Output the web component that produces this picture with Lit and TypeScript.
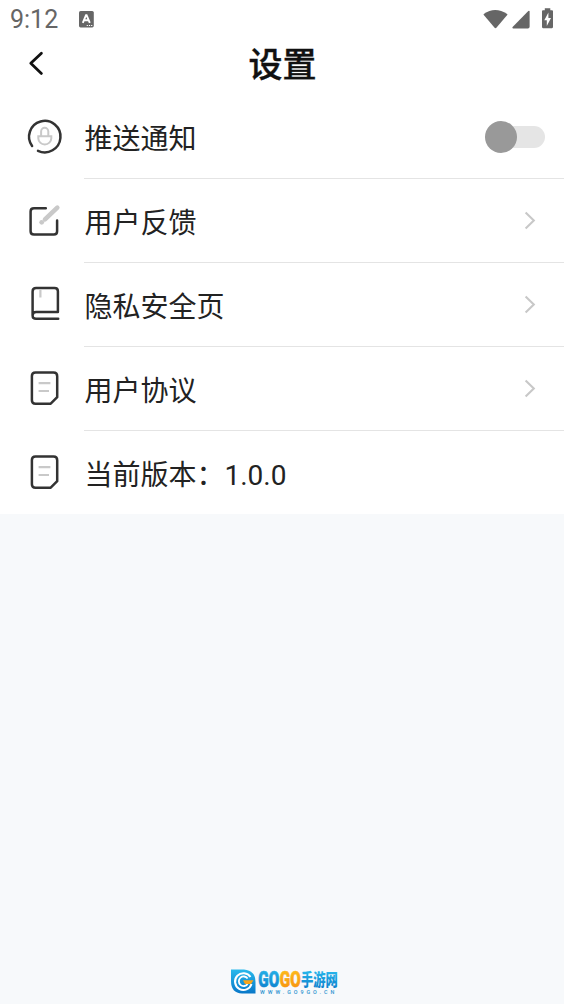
import { LitElement, html, css, svg } from "lit";
import { customElement } from "lit/decorators.js";

const doc = svg`
  <path class="dark" d="M15.5 8.5H33.5Q37.2 8.5 37.2 12.2V33.2L30.7 39.7H15.5Q11.9 39.7 11.9 36.2V12Q11.9 8.5 15.5 8.5Z"/>
  <path class="pale" d="M18.6 19.2H30.4M18.6 27H29"/>`;

const icons = {
  notify: svg`
    <path class="dark" d="M12.1 33.9A15.7 15.7 0 1 1 18 38.8"/>
    <path class="pale thin" d="M21.1 24V19.4A3.6 3.6 0 0 1 28.3 19.4V24M18.3 24.2H31.3V26.3A6.5 6.1 0 0 1 18.3 26.3Z"/>`,
  feedback: svg`
    <path class="dark" d="M25.8 12.3H14Q10.6 12.3 10.6 15.5V35.2Q10.6 38.5 14 38.5H33.9Q37.1 38.5 37.1 35.2V24.5"/>
    <path class="pencil" d="M25 23.4L37.3 11.6"/><circle cx="21.7" cy="26.3" r="2.4" fill="#c9c9c9"/>`,
  privacy: svg`
    <path class="dark" d="M12.6 35.2V11.5Q12.6 8.1 16.1 8.1H34.5Q37.9 8.1 37.9 11.3V31.9H16.2Q12.6 31.9 12.6 35.4T16.2 38.8H38.2"/>
    <path class="pale" d="M20.4 9.8V17.5"/>`,
  agreement: doc,
  version: doc,
};

const rows: { icon: keyof typeof icons; label: string; end: "switch" | "arrow" | "" }[] = [
  { icon: "notify", label: "推送通知", end: "switch" },
  { icon: "feedback", label: "用户反馈", end: "arrow" },
  { icon: "privacy", label: "隐私安全页", end: "arrow" },
  { icon: "agreement", label: "用户协议", end: "arrow" },
  { icon: "version", label: "当前版本：1.0.0", end: "" },
];

@customElement("app-root")
export class AppRoot extends LitElement {
  static styles = css`
    :host {
      display: flex;
      flex-direction: column;
      height: 1004px;
      overflow: hidden;
      background: #f7f9fb;
      font-family: Roboto, "Noto Sans CJK SC", sans-serif;
      color: #222;
    }
    svg { display: block; flex: none; fill: none; }
    .status {
      display: flex;
      align-items: center;
      height: 38px;
      padding: 0 10px 0 9px;
      background: #fff;
      color: #666;
      box-sizing: border-box;
    }
    .time { font-size: 25px; line-height: 38px; width: 69px; padding: 2px 0 0 1px; }
    .grow { flex: 1; }
    .header {
      display: grid;
      grid-template-columns: 72px 1fr 72px;
      align-items: center;
      height: 57px;
      background: #fff;
    }
    .title {
      text-align: center;
      font-size: 34px;
      line-height: 50px;
      font-weight: 500;
      color: #111;
      -webkit-text-stroke: 0.4px #111;
      padding: 0 0 3px 1px;
    }
    .back { padding: 0 0 7px 24px; }
    .list { background: #fff; }
    .row { display: flex; height: 84px; padding-left: 20px; }
    .row:last-child { height: 83px; }
    .icon { padding-top: 17px; }
    .body {
      display: flex;
      flex: 1;
      align-items: center;
      height: 84px;
      margin-left: 15px;
      box-sizing: border-box;
      border-bottom: 1px solid #e4e4e4;
    }
    .row:last-child .body { border-color: transparent; }
    .label { flex: 1; font-size: 28px; line-height: 42px; padding: 6px 0 0 0.5px; }
    .dark { stroke: #333; stroke-width: 2.5; stroke-linecap: round; stroke-linejoin: round; }
    .pale { stroke: #c9c9c9; stroke-width: 2.2; }
    .thin { stroke-width: 2; }
    .pencil { stroke: #c9c9c9; stroke-width: 4.6; stroke-linecap: round; }
    .switch { display: flex; align-items: center; width: 60px; height: 32px; margin-right: 19px; }
    .knob { width: 32px; height: 32px; border-radius: 50%; background: #999; z-index: 1; }
    .track { width: 44px; height: 22px; margin-left: -16px; border-radius: 11px; background: #e5e5e5; }
    .arrow { margin-right: 24px; }
    .brand { display: flex; justify-content: center; margin-top: auto; height: 36px; padding-left: 8px; }
    .logo { font-weight: 900; }
    .heavy { stroke-width: 0.5; }
    .site { font-weight: 500; }
  `;

  private end(kind: string) {
    if (kind === "switch") {
      return html`<div class="switch"><span class="knob"></span><span class="track"></span></div>`;
    }
    if (kind === "arrow") {
      return html`<svg class="arrow" width="20" height="24" viewBox="0 0 20 24">
        <path d="M5.6 3.5L13.8 11.5L5.6 19.5" stroke="#c8c8c8" stroke-width="2.1"/>
      </svg>`;
    }
    return "";
  }

  render() {
    return html`
      <div class="status">
        <span class="time">9:12</span>
        <svg width="15" height="17" viewBox="0 0 15 17">
          <rect width="14.8" height="16.4" rx="1.6" fill="#666"/>
          <path d="M3.8 11.8L7 4.2H7.6L10.8 11.8M5.2 9.3H9.4" stroke="#fff" stroke-width="1.9"/>
          <path d="M7.7 14.5H13.6" stroke="#fff" stroke-width="1.2" stroke-dasharray="1.2 1"/>
        </svg>
        <span class="grow"></span>
        <svg width="72" height="24" viewBox="0 0 72 24">
          <path fill="#666" d="M1.8 7Q13 -1 25.2 7Q25.6 7.5 25.2 8L14.6 20.6Q13.5 21.7 12.4 20.6L1.8 8Q1.4 7.5 1.8 7Z"/>
          <path fill="#666" d="M47.6 4.5V19.7Q47.6 21.4 45.9 21.4H31Q29.8 21.1 30.6 20.1L46.3 4Q47.4 3.2 47.6 4.5Z"/>
          <path fill="#666" d="M62.8 1.2H68.3V3.3H70Q71 3.3 71 4.3V20.1Q71 21.2 70 21.2H61Q60 21.2 60 20.1V4.3Q60 3.3 61 3.3H62.8Z"/>
          <path fill="#fff" d="M66.4 5.5L62.3 13.3H64.8V19L69 10.9H66.4Z"/>
        </svg>
      </div>
      <div class="header">
        <div class="back">
          <svg width="24" height="28" viewBox="0 0 24 28">
            <path d="M17.4 4.2L6.8 14.3L17.4 24.4" stroke="#111" stroke-width="2.8" stroke-linecap="round" stroke-linejoin="round"/>
          </svg>
        </div>
        <div class="title">设置</div>
      </div>
      <div class="list">
        ${rows.map(
          (r) => html`<div class="row">
            <div class="icon"><svg width="49" height="49" viewBox="0 0 49 49">${icons[r.icon]}</svg></div>
            <div class="body"><span class="label">${r.label}</span>${this.end(r.end)}</div>
          </div>`
        )}
      </div>
      <div class="brand">
        <svg width="110" height="34" viewBox="0 0 110 34">
          <defs>
            <linearGradient id="blue" x1="0" y1="0" x2="0" y2="1">
              <stop offset="0" stop-color="#29b9ec"/><stop offset="1" stop-color="#0877c8"/>
            </linearGradient>
            <linearGradient id="gold" x1="0" y1="0" x2="0" y2="1">
              <stop offset="0" stop-color="#ffc21c"/><stop offset="1" stop-color="#f58a0b"/>
            </linearGradient>
          </defs>
          <path fill="url(#blue)" d="M0 1.5H13Q24.5 2.5 24.5 14V25.5H11Q0 25 0 13Z"/>
          <path d="M19.5 9A8.4 8.4 0 1 0 20.5 16" stroke="#fff" stroke-width="2"/>
          <path d="M16.6 10.5A4.8 4.8 0 1 0 16.6 16" stroke="#fff" stroke-width="1.8"/>
          <path d="M12 12.3H22.5L20 16H14Z" fill="#f9a51b"/>
          <g class="logo">
            <text class="heavy" transform="translate(27.3 19.4) scale(1 1.45)" font-size="15.2" fill="url(#blue)" stroke="url(#blue)">GO</text>
            <text class="heavy" transform="translate(48.8 19.4) scale(1 1.45)" font-size="15.2" fill="url(#gold)" stroke="url(#gold)">GO</text>
            <text transform="translate(70 18.4) scale(1 1.36)" font-size="12.3" fill="url(#blue)">手游网</text>
            <text class="site" x="29" y="26.2" font-size="5.4" letter-spacing="2.95" fill="#2d93cf">WWW.GO9GO.CN</text>
          </g>
        </svg>
      </div>
    `;
  }
}
